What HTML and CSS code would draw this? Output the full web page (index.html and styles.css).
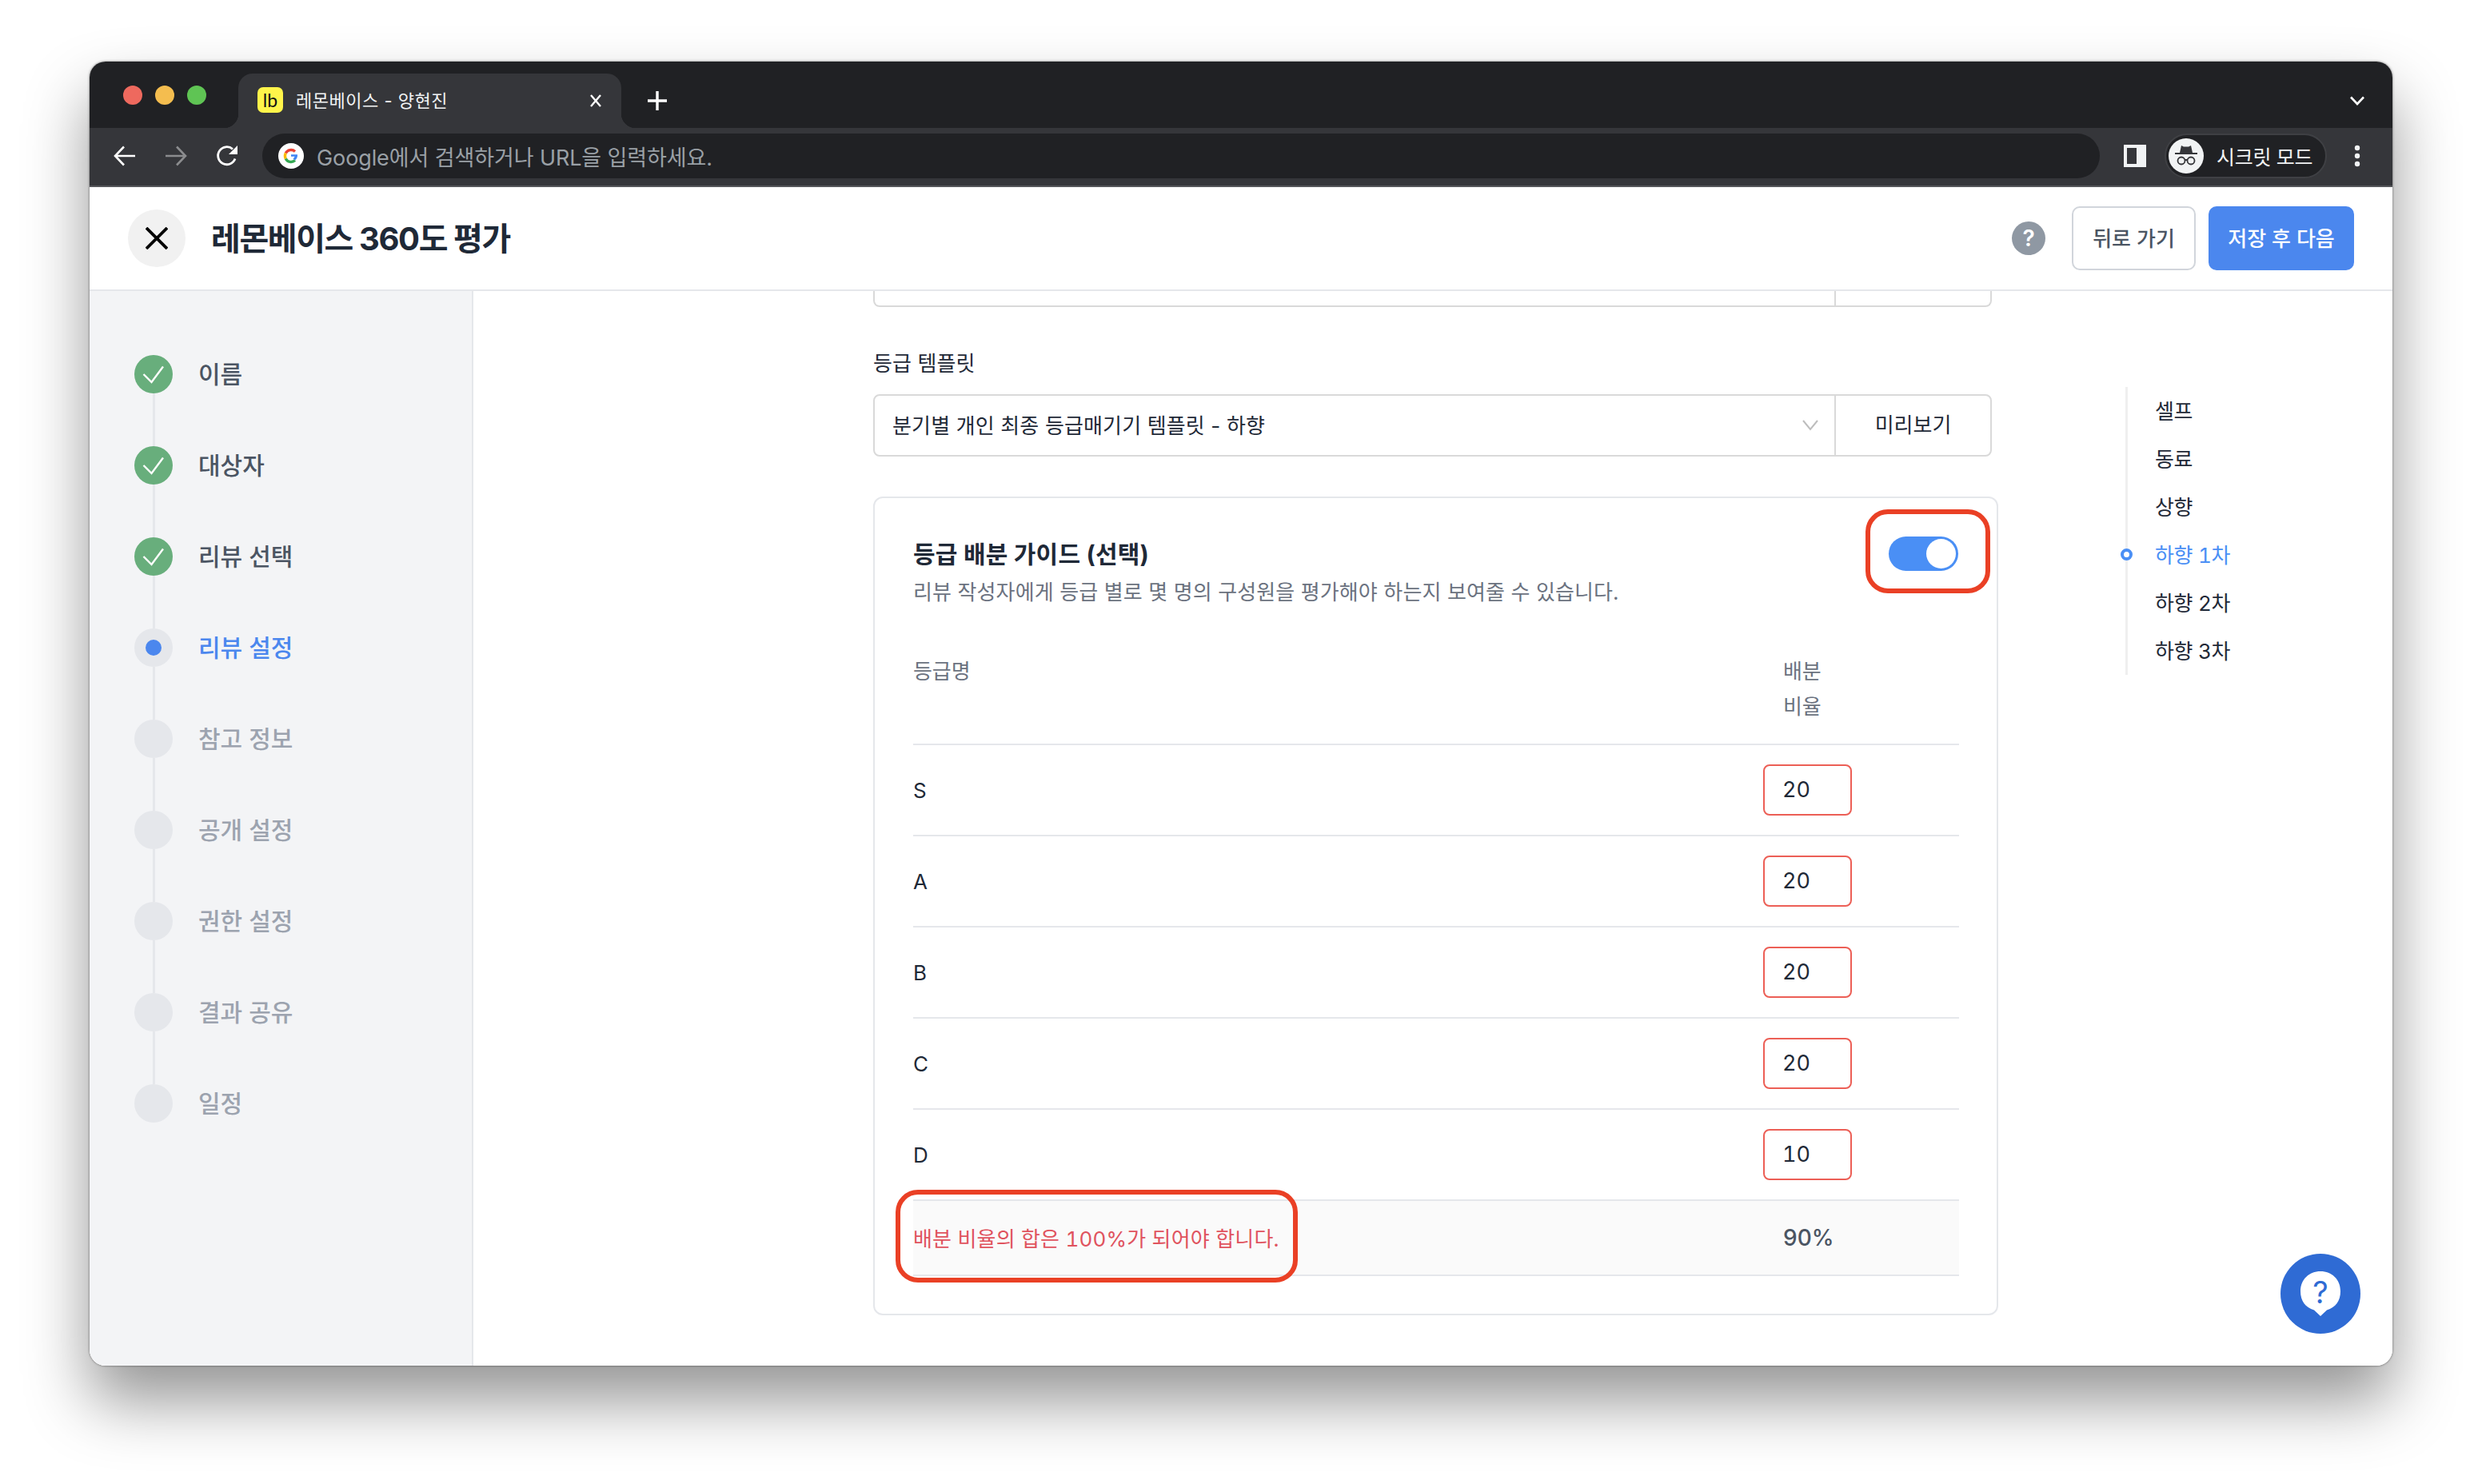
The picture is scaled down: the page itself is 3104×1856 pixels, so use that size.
FILE: index.html
```html
<!DOCTYPE html>
<html lang="ko">
<head>
    <meta charset="UTF-8">
    <title>레몬베이스 360도 평가</title>
    <link rel="stylesheet" href="styles.css">
</head>
<body>
    <div class="window">
        <div class="tab-strip">
            <div class="lights">
                <span class="light light-red"></span>
                <span class="light light-yellow"></span>
                <span class="light light-green"></span>
            </div>
            <div class="tab">
                <span class="favicon">lb</span>
                <span class="tab-title">레몬베이스 - 양현진</span>
                <svg width="16" height="16" viewBox="0 0 16 16"><path d="M2 1l12 14M14 1L2 15" stroke="#fff" stroke-width="2.4" fill="none"/></svg>
            </div>
            <svg class="new-tab" width="24" height="24" viewBox="0 0 24 24"><path d="M12 0v24M0 12h24" stroke="#fff" stroke-width="3.4" fill="none"/></svg>
            <svg class="tab-list" width="18" height="12" viewBox="0 0 18 12"><path d="M1 1.5l8 8.5 8-8.5" stroke="#fff" stroke-width="2.6" fill="none"/></svg>
        </div>

        <div class="toolbar">
            <span class="tool-btn">
                <svg width="28" height="26" viewBox="0 0 28 26"><path d="M27 13H3M13 1.5L2 13l11 11.5" stroke="#fff" stroke-width="2.6" fill="none"/></svg>
            </span>
            <span class="tool-btn">
                <svg width="28" height="26" viewBox="0 0 28 26"><path d="M1 13h24M15 1.5L26 13 15 24.5" stroke="#8b8c8e" stroke-width="2.6" fill="none"/></svg>
            </span>
            <span class="tool-btn">
                <svg width="28" height="28" viewBox="0 0 28 28"><path d="M24 17.5A11 11 0 1 1 21 5.5" stroke="#fff" stroke-width="2.8" fill="none"/><path d="M27 1v11H16z" fill="#fff"/></svg>
            </span>
            <div class="address">
                <svg width="32" height="32" viewBox="0 0 32 32">
                    <circle cx="16" cy="16" r="16" fill="#fff"/>
                    <path d="M9.3 12.6A7.5 7.5 0 0 1 21 10.4" stroke="#ea4335" stroke-width="3.4" fill="none"/>
                    <path d="M9.3 19.4a7.5 7.5 0 0 1 0-6.8" stroke="#fbbc05" stroke-width="3.4" fill="none"/>
                    <path d="M21 21.6A7.5 7.5 0 0 1 9.3 19.4" stroke="#34a853" stroke-width="3.4" fill="none"/>
                    <path d="M16 14.3h8c.3 2.9-.8 5.6-3 7.3l-2.4-2.3c1-.7 1.7-1.6 2-2.5H16z" fill="#4285f4"/>
                </svg>
                <span class="address-text">Google에서 검색하거나 URL을 입력하세요.</span>
            </div>
            <svg class="side-panel" width="28" height="28" viewBox="0 0 28 28"><path d="M0 0h28v28H0z" fill="#f1f3f4"/><path d="M4 4h12v20H4z" fill="#35363a"/></svg>
            <div class="profile">
                <span class="profile-avatar">
                    <svg width="30" height="28" viewBox="0 0 30 28">
                        <path d="M9 1l3 1.5h6l3-1.5 2 9H7z" fill="#35363a"/>
                        <path d="M1 11h28" stroke="#35363a" stroke-width="2"/>
                        <circle cx="9" cy="20" r="4.5" stroke="#35363a" stroke-width="1.8" fill="none"/>
                        <circle cx="21" cy="20" r="4.5" stroke="#35363a" stroke-width="1.8" fill="none"/>
                        <path d="M13 19h4" stroke="#35363a" stroke-width="1.8"/>
                    </svg>
                </span>
                <span class="profile-name">시크릿 모드</span>
            </div>
            <span class="tool-btn menu-btn">
                <svg width="8" height="28" viewBox="0 0 8 28"><circle cx="4" cy="4" r="3.2" fill="#f1f3f4"/><circle cx="4" cy="14" r="3.2" fill="#f1f3f4"/><circle cx="4" cy="24" r="3.2" fill="#f1f3f4"/></svg>
            </span>
        </div>

        <header class="page-header">
            <span class="close-btn">
                <svg width="28" height="28" viewBox="0 0 28 28"><path d="M1 1l26 26M27 1L1 27" stroke="#000" stroke-width="3.8" fill="none"/></svg>
            </span>
            <h1 class="page-title">레몬베이스 360도 평가</h1>
            <span class="help-icon">?</span>
            <button class="btn btn-back">뒤로 가기</button>
            <button class="btn btn-save">저장 후 다음</button>
        </header>

        <div class="page-body">
            <aside class="sidebar">
                <div class="step step-done">
                    <div class="step-marker">
                        <span class="step-circle"><svg width="48" height="48" viewBox="0 0 48 48"><path d="M11.5 24l10 10L36 14.5" stroke="#fff" stroke-width="2.4" fill="none"/></svg></span>
                        <span class="step-line"></span>
                    </div>
                    <span class="step-label">이름</span>
                </div>
                <div class="step step-done">
                    <div class="step-marker">
                        <span class="step-circle"><svg width="48" height="48" viewBox="0 0 48 48"><path d="M11.5 24l10 10L36 14.5" stroke="#fff" stroke-width="2.4" fill="none"/></svg></span>
                        <span class="step-line"></span>
                    </div>
                    <span class="step-label">대상자</span>
                </div>
                <div class="step step-done">
                    <div class="step-marker">
                        <span class="step-circle"><svg width="48" height="48" viewBox="0 0 48 48"><path d="M11.5 24l10 10L36 14.5" stroke="#fff" stroke-width="2.4" fill="none"/></svg></span>
                        <span class="step-line"></span>
                    </div>
                    <span class="step-label">리뷰 선택</span>
                </div>
                <div class="step step-current">
                    <div class="step-marker">
                        <span class="step-circle"><span class="step-dot"></span></span>
                        <span class="step-line"></span>
                    </div>
                    <span class="step-label">리뷰 설정</span>
                </div>
                <div class="step">
                    <div class="step-marker"><span class="step-circle"></span><span class="step-line"></span></div>
                    <span class="step-label">참고 정보</span>
                </div>
                <div class="step">
                    <div class="step-marker"><span class="step-circle"></span><span class="step-line"></span></div>
                    <span class="step-label">공개 설정</span>
                </div>
                <div class="step">
                    <div class="step-marker"><span class="step-circle"></span><span class="step-line"></span></div>
                    <span class="step-label">권한 설정</span>
                </div>
                <div class="step">
                    <div class="step-marker"><span class="step-circle"></span><span class="step-line"></span></div>
                    <span class="step-label">결과 공유</span>
                </div>
                <div class="step">
                    <div class="step-marker"><span class="step-circle"></span></div>
                    <span class="step-label">일정</span>
                </div>
            </aside>

            <main class="content">
                <div class="form-col">
                    <div class="select-box select-box-cut">
                        <div class="select-field"></div>
                        <div class="select-action"></div>
                    </div>

                    <div class="field-label">등급 템플릿</div>
                    <div class="select-box">
                        <div class="select-field">
                            <span class="select-value">분기별 개인 최종 등급매기기 템플릿 - 하향</span>
                            <svg width="20" height="14" viewBox="0 0 20 14"><path d="M1 1l9 11 9-11" stroke="#bdbdbd" stroke-width="2" fill="none"/></svg>
                        </div>
                        <div class="select-action">미리보기</div>
                    </div>

                    <section class="card">
                        <div class="card-head">
                            <div>
                                <h2 class="card-title">등급 배분 가이드 (선택)</h2>
                                <p class="card-desc">리뷰 작성자에게 등급 별로 몇 명의 구성원을 평가해야 하는지 보여줄 수 있습니다.</p>
                            </div>
                            <span class="toggle"><span class="toggle-knob"></span></span>
                        </div>

                        <table class="grade-table">
                            <thead>
                                <tr>
                                    <th>등급명</th>
                                    <th class="col-ratio">배분<br>비율</th>
                                </tr>
                            </thead>
                            <tbody>
                                <tr><td>S</td><td><span class="ratio-input">20</span></td></tr>
                                <tr><td>A</td><td><span class="ratio-input">20</span></td></tr>
                                <tr><td>B</td><td><span class="ratio-input">20</span></td></tr>
                                <tr><td>C</td><td><span class="ratio-input">20</span></td></tr>
                                <tr><td>D</td><td><span class="ratio-input">10</span></td></tr>
                            </tbody>
                            <tfoot>
                                <tr>
                                    <td class="sum-error">배분 비율의 합은 100%가 되어야 합니다.</td>
                                    <td class="sum-value">90%</td>
                                </tr>
                            </tfoot>
                        </table>

                        <span class="mark mark-toggle"></span>
                        <span class="mark mark-error"></span>
                    </section>
                </div>

                <nav class="anchors">
                    <a class="anchor">셀프</a>
                    <a class="anchor">동료</a>
                    <a class="anchor">상향</a>
                    <a class="anchor anchor-active">하향 1차</a>
                    <a class="anchor">하향 2차</a>
                    <a class="anchor">하향 3차</a>
                </nav>

                <span class="chat-btn">
                    <svg width="50" height="56" viewBox="0 0 50 56">
                        <path d="M25 0C39 0 50 10 50 25c0 12-6 20-17 23.5L25 56l-8-7.500C6 45 0 37 0 25 0 10 11 0 25 0z" fill="#fff"/>
                        <text x="25" y="40" text-anchor="middle" class="chat-mark">?</text>
                    </svg>
                </span>
            </main>
        </div>
    </div>
</body>
</html>
```

FILE: styles.css
```css
* {
    box-sizing: border-box;
}

html, body {
    margin: 0;
    height: 100%;
}

body {
    width: 3104px;
    height: 1856px;
    overflow: hidden;
    padding: 77px 112px 0 112px;
    background-color: #fff;
    font-family: Inter, "Noto Sans CJK KR", sans-serif;
    color: #1f2937;
}

.window {
    height: 1631px;
    display: flex;
    flex-direction: column;
    border-radius: 20px;
    overflow: hidden;
    box-shadow: 0 44px 80px rgba(0, 0, 0, 0.42), 0 0 3px rgba(0, 0, 0, 0.55);
}

/* browser chrome */
.tab-strip {
    height: 83px;
    flex: none;
    display: flex;
    align-items: flex-end;
    padding-left: 42px;
    background-color: #202124;
}

.lights {
    display: flex;
    gap: 16px;
    align-self: flex-start;
    margin-top: 30px;
}

.light {
    width: 24px;
    height: 24px;
    border-radius: 50%;
}

.light-red {
    background-color: #ee695e;
}

.light-yellow {
    background-color: #f4bd4f;
}

.light-green {
    background-color: #5fc454;
}

.tab {
    position: relative;
    width: 479px;
    height: 68px;
    margin-left: 40px;
    display: flex;
    align-items: center;
    padding: 0 24px;
    background-color: #35363a;
    border-radius: 18px 18px 0 0;
}

.tab::before,
.tab::after {
    content: "";
    position: absolute;
    bottom: 0;
    width: 18px;
    height: 18px;
}

.tab::before {
    left: -18px;
    background: radial-gradient(circle at 0 0, #202124 18px, #35363a 18.5px);
}

.tab::after {
    right: -18px;
    background: radial-gradient(circle at 100% 0, #202124 18px, #35363a 18.5px);
}

.favicon {
    width: 32px;
    height: 32px;
    margin-top: -2px;
    border-radius: 7px;
    background-color: #fff44a;
    color: #111;
    font-family: Lato, sans-serif;
    font-size: 23px;
    line-height: 32px;
    text-align: center;
}

.tab-title {
    flex: 1;
    margin: -4px 0 0 16px;
    font-size: 22px;
    letter-spacing: 0.5px;
    color: #f1f3f4;
}

.new-tab {
    margin: 0 0 22px 33px;
}

.tab-list {
    margin: 0 35px 28px auto;
}

.toolbar {
    height: 74px;
    flex: none;
    display: flex;
    align-items: center;
    padding: 6px 12px 8px 12px;
    background-color: #35363a;
    border-bottom: 2px solid #55565a;
}

.tool-btn {
    width: 64px;
    height: 56px;
    flex: none;
    display: flex;
    align-items: center;
    justify-content: center;
}

.address {
    flex: 1;
    height: 56px;
    margin-left: 12px;
    display: flex;
    align-items: center;
    padding-left: 20px;
    border-radius: 28px;
    background-color: #202124;
}

.address-text {
    margin-left: 16px;
    font-size: 27px;
    letter-spacing: -0.1px;
    color: #9aa0a6;
}

.side-panel {
    flex: none;
    margin-left: 30px;
}

.profile {
    width: 203px;
    height: 56px;
    flex: none;
    margin-left: 23px;
    display: flex;
    align-items: center;
    padding-left: 3px;
    border-radius: 28px;
    border: 2px solid #3f4044;
    background-color: #202124;
}

.profile-avatar {
    width: 44px;
    height: 44px;
    display: flex;
    align-items: center;
    justify-content: center;
    border-radius: 50%;
    background-color: #f1f3f4;
}

.profile-name {
    margin-left: 16px;
    font-size: 25px;
    letter-spacing: -0.3px;
    color: #f1f3f4;
}

.menu-btn {
    margin-left: 6px;
}

/* page header */
.page-header {
    height: 130px;
    flex: none;
    display: flex;
    align-items: center;
    padding: 0 48px;
    background-color: #fff;
    border-bottom: 2px solid #e5e7eb;
}

.close-btn {
    width: 72px;
    height: 72px;
    display: flex;
    align-items: center;
    justify-content: center;
    border-radius: 50%;
    background-color: #f1f1f1;
}

.page-title {
    flex: 1;
    margin: 0 0 4px 32px;
    font-size: 40px;
    font-weight: 700;
    letter-spacing: -1.4px;
    color: #1f2937;
}

.help-icon {
    width: 42px;
    height: 42px;
    margin-right: 33px;
    border-radius: 50%;
    background-color: #8f98a3;
    color: #fff;
    font-size: 28px;
    font-weight: 600;
    line-height: 42px;
    text-align: center;
}

.btn {
    height: 80px;
    padding: 0 0 3px;
    font-family: inherit;
    font-size: 26px;
    font-weight: 500;
    border-radius: 10px;
}

.btn-back {
    width: 155px;
    background-color: #fff;
    border: 2px solid #d1d5db;
    color: #4b5563;
}

.btn-save {
    width: 182px;
    margin-left: 16px;
    background-color: #4b87ee;
    border: none;
    color: #fff;
}

/* page body */
.page-body {
    flex: 1;
    display: flex;
    min-height: 0;
    background-color: #fff;
}

.sidebar {
    width: 480px;
    flex: none;
    padding: 80px 0 0 56px;
    background-color: #f3f4f6;
    border-right: 2px solid #e5e7eb;
}

.step {
    height: 114px;
    display: flex;
    gap: 32px;
    font-size: 30px;
    font-weight: 500;
    color: #9ca3af;
}

.step-marker {
    width: 48px;
    display: flex;
    flex-direction: column;
    align-items: center;
}

.step-circle {
    width: 48px;
    height: 48px;
    flex: none;
    display: flex;
    align-items: center;
    justify-content: center;
    border-radius: 50%;
    background-color: #e5e7eb;
}

.step-line {
    width: 3px;
    flex: 1;
    background-color: #e5e7eb;
}

.step-label {
    line-height: 48px;
}

.step-done {
    color: #4b5563;
}

.step-done .step-circle {
    background-color: #68ae7c;
}

.step-current {
    color: #4b87ee;
}

.step-dot {
    width: 20px;
    height: 20px;
    border-radius: 50%;
    background-color: #4b87ee;
}

/* main column */
.content {
    position: relative;
    flex: 1;
    display: flex;
    padding-left: 500px;
    overflow: hidden;
}

.form-col {
    width: 1407px;
    flex: none;
}

.select-box {
    width: 1399px;
    height: 78px;
    display: flex;
    border: 2px solid #d9d9d9;
    border-radius: 8px;
    font-size: 26px;
    color: #1f2937;
}

.select-box-cut {
    height: 20px;
    border-top: none;
    border-radius: 0 0 8px 8px;
}

.select-field {
    flex: 1;
    display: flex;
    align-items: center;
    justify-content: space-between;
    padding: 0 20px 0 22px;
}

.select-value {
    margin-top: -3px;
    letter-spacing: 0.15px;
}

.select-action {
    width: 195px;
    flex: none;
    line-height: 74px;
    text-align: center;
    border-left: 2px solid #d9d9d9;
}

.field-label {
    margin: 51px 0 18px;
    line-height: 40px;
    font-size: 26px;
    letter-spacing: 0.1px;
    color: #1f2937;
}

.card {
    position: relative;
    width: 1407px;
    height: 1024px;
    margin-top: 50px;
    padding: 48px 47px 0 48px;
    border: 2px solid #e5e7eb;
    border-radius: 12px;
}

.card-head {
    display: flex;
    justify-content: space-between;
    align-items: flex-start;
}

.card-title {
    margin: 0;
    font-size: 30px;
    font-weight: 700;
    line-height: 44px;
    letter-spacing: 0.2px;
    color: #1f2937;
}

.card-desc {
    margin: 6px 0 0;
    font-size: 26px;
    line-height: 40px;
    letter-spacing: 0.12px;
    color: #6b7280;
}

.toggle {
    width: 87px;
    height: 43px;
    margin-right: 1px;
    padding: 3px;
    display: flex;
    justify-content: flex-end;
    border-radius: 22px;
    background-color: #4a8ff5;
}

.toggle-knob {
    width: 37px;
    height: 37px;
    border-radius: 50%;
    background-color: #fff;
}

.grade-table {
    width: 1308px;
    margin-top: 45px;
    table-layout: fixed;
    border-collapse: separate;
    border-spacing: 0;
    font-size: 26px;
}

.grade-table th {
    padding: 12px 0 24px;
    border-bottom: 2px solid #e5e7eb;
    font-weight: 400;
    line-height: 44px;
    text-align: left;
    vertical-align: top;
    letter-spacing: -0.1px;
    color: #6b7280;
}

.grade-table th.col-ratio {
    width: 245px;
    padding-left: 25px;
}

.grade-table td {
    height: 114px;
    padding: 0;
    border-bottom: 2px solid #e5e7eb;
    color: #1f2937;
}

.ratio-input {
    display: block;
    width: 111px;
    height: 64px;
    padding-left: 22px;
    border: 2px solid #ec5f56;
    border-radius: 8px;
    font-size: 27px;
    line-height: 60px;
    font-variant-numeric: tabular-nums;
}

.grade-table tfoot td {
    height: 94px;
    background-color: #fafafa;
}

.grade-table td.sum-error {
    padding-bottom: 2px;
    letter-spacing: 0.2px;
    font-variant-numeric: tabular-nums;
    color: #e0535e;
}

.grade-table td.sum-value {
    padding-left: 25px;
    font-size: 28px;
    font-weight: 500;
    color: #4b5563;
}

/* red review marks drawn over the card */
.mark {
    position: absolute;
    border: 6px solid #ea4025;
    border-radius: 28px;
}

.mark-toggle {
    left: 1239px;
    top: 14px;
    width: 156px;
    height: 105px;
}

.mark-error {
    left: 26px;
    top: 865px;
    width: 503px;
    height: 116px;
}

.anchors {
    align-self: flex-start;
    margin: 120px 0 0 159px;
    display: flex;
    flex-direction: column;
    border-left: 3px solid #efefef;
    font-size: 26px;
    font-variant-numeric: tabular-nums;
}

.anchor {
    position: relative;
    height: 60px;
    padding-left: 34px;
    line-height: 61px;
    letter-spacing: -0.3px;
    color: #1f2937;
    white-space: nowrap;
}

.anchor-active {
    color: #4a8ff5;
}

.anchor-active::before {
    content: "";
    position: absolute;
    left: -9px;
    top: 22px;
    width: 7px;
    height: 7px;
    border: 4px solid #4a8ff5;
    border-radius: 50%;
    background-color: #fff;
}

.chat-btn {
    position: absolute;
    right: 40px;
    bottom: 40px;
    width: 100px;
    height: 100px;
    display: flex;
    align-items: center;
    justify-content: center;
    border-radius: 50%;
    background-color: #2f6bd4;
}

.chat-mark {
    font-family: Inter, sans-serif;
    font-size: 38px;
    font-weight: 400;
    fill: #2f6bd4;
}
```
